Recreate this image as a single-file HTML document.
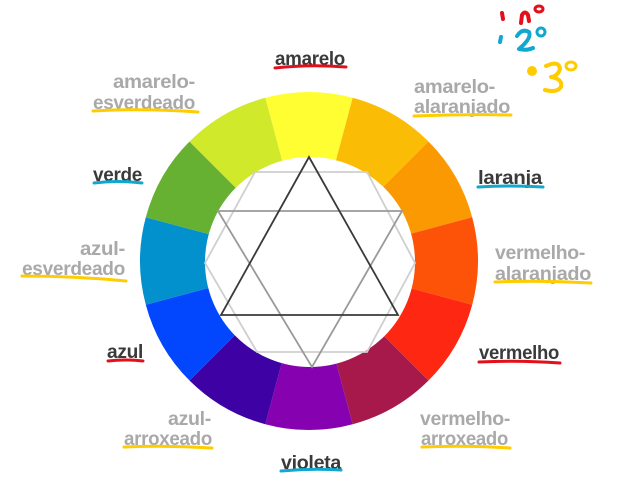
<!DOCTYPE html>
<html><head><meta charset="utf-8"><style>
html,body{margin:0;padding:0;background:#fff;width:621px;height:498px;overflow:hidden}
svg{display:block}
text{font-family:"Liberation Sans",sans-serif;font-weight:bold;font-size:19px;letter-spacing:-0.3px}
.g{fill:#a9a9a9}.d{fill:#3a3a3a}
.u{fill:none;stroke-width:3;stroke-linecap:round}
.r{stroke:#e3101c}.b{stroke:#10a8cf}.y{stroke:#ffcc00}
</style></head><body>
<svg width="621" height="498" viewBox="0 0 621 498">
<g>
<path d="M309 261 L265.3 97.8 A169 169 0 0 1 352.7 97.8Z" fill="#fefe33"/>
<path d="M309 261 L352.7 97.8 A169 169 0 0 1 428.5 141.5Z" fill="#fbbc05"/>
<path d="M309 261 L428.5 141.5 A169 169 0 0 1 472.2 217.3Z" fill="#fb9902"/>
<path d="M309 261 L472.2 217.3 A169 169 0 0 1 472.2 304.7Z" fill="#fd5308"/>
<path d="M309 261 L472.2 304.7 A169 169 0 0 1 428.5 380.5Z" fill="#fe2712"/>
<path d="M309 261 L428.5 380.5 A169 169 0 0 1 352.7 424.2Z" fill="#a7194b"/>
<path d="M309 261 L352.7 424.2 A169 169 0 0 1 265.3 424.2Z" fill="#8601af"/>
<path d="M309 261 L265.3 424.2 A169 169 0 0 1 189.5 380.5Z" fill="#3d01a4"/>
<path d="M309 261 L189.5 380.5 A169 169 0 0 1 145.8 304.7Z" fill="#0247fe"/>
<path d="M309 261 L145.8 304.7 A169 169 0 0 1 145.8 217.3Z" fill="#0391ce"/>
<path d="M309 261 L145.8 217.3 A169 169 0 0 1 189.5 141.5Z" fill="#66b032"/>
<path d="M309 261 L189.5 141.5 A169 169 0 0 1 265.3 97.8Z" fill="#d0ea2b"/>
<circle cx="310" cy="262" r="105" fill="#fff"/>
</g>
<polygon points="255,172 367,172 415,263 367,352 257,352 205,263" fill="none" stroke="#cfcfcf" stroke-width="1.8"/>
<polygon points="218,211 402,211 312,367" fill="none" stroke="#9a9a9a" stroke-width="1.8"/>
<polygon points="309,157 221,315 398,315" fill="none" stroke="#3a3a3a" stroke-width="1.8"/>

<text class="d" x="275" y="65" textLength="70" lengthAdjust="spacingAndGlyphs">amarelo</text>
<path class="u r" d="M275 68 Q310 64 346 67"/>

<text class="g" x="113" y="88" textLength="82" lengthAdjust="spacingAndGlyphs">amarelo-</text>
<text class="g" x="93" y="109" textLength="102" lengthAdjust="spacingAndGlyphs">esverdeado</text>
<path class="u y" d="M93 111 Q145 108 198 112"/>

<text class="d" x="93" y="181" textLength="49" lengthAdjust="spacingAndGlyphs">verde</text>
<path class="u b" d="M94 183 Q118 180 142 183"/>

<text class="g" x="80" y="255" textLength="45" lengthAdjust="spacingAndGlyphs">azul-</text>
<text class="g" x="22" y="275" textLength="103" lengthAdjust="spacingAndGlyphs">esverdeado</text>
<path class="u y" d="M22 276 Q75 276 126 281"/>

<text class="d" x="107" y="358" textLength="36" lengthAdjust="spacingAndGlyphs">azul</text>
<path class="u r" d="M108 361 Q125 359 143 361"/>

<text class="g" x="168" y="425" textLength="43" lengthAdjust="spacingAndGlyphs">azul-</text>
<text class="g" x="124" y="445" textLength="88" lengthAdjust="spacingAndGlyphs">arroxeado</text>
<path class="u y" d="M124 447 Q168 445 212 448"/>

<text class="d" x="281" y="469" textLength="60" lengthAdjust="spacingAndGlyphs">violeta</text>
<path class="u b" d="M281 471 Q311 468 341 470"/>

<text class="g" x="420" y="425" textLength="90" lengthAdjust="spacingAndGlyphs">vermelho-</text>
<text class="g" x="421" y="445" textLength="87" lengthAdjust="spacingAndGlyphs">arroxeado</text>
<path class="u y" d="M422 447 Q465 445 510 448"/>

<text class="d" x="479" y="359" textLength="80" lengthAdjust="spacingAndGlyphs">vermelho</text>
<path class="u r" d="M479 362 Q520 360 560 363"/>

<text class="g" x="495" y="259" textLength="90" lengthAdjust="spacingAndGlyphs">vermelho-</text>
<text class="g" x="495" y="280" textLength="96" lengthAdjust="spacingAndGlyphs">alaranjado</text>
<path class="u y" d="M495 282 Q543 280 591 283"/>

<text class="d" x="478" y="184" textLength="64" lengthAdjust="spacingAndGlyphs">laranja</text>
<path class="u b" d="M478 187 Q510 185 543 187"/>

<text class="g" x="414" y="93" textLength="81" lengthAdjust="spacingAndGlyphs">amarelo-</text>
<text class="g" x="414" y="113" textLength="96" lengthAdjust="spacingAndGlyphs">alaranjado</text>
<path class="u y" d="M414 116 Q462 114 511 115"/>

<g fill="none" stroke-linecap="round" stroke-linejoin="round" stroke-width="4">
<path d="M502 13 L503 19" stroke="#e3101c"/>
<path d="M521 23 L522 15 Q525 10 528 15 L529 21" stroke="#e3101c"/>
<ellipse cx="539" cy="9" rx="4" ry="3" stroke="#e3101c" stroke-width="3"/>
<path d="M501 37 L500 42" stroke="#10a8cf"/>
<path d="M517 36 Q522 28 529 32 Q532 38 519 49 Q526 51 533 48" stroke="#10a8cf"/>
<ellipse cx="541" cy="32" rx="4" ry="4" stroke="#10a8cf" stroke-width="3"/>
<circle cx="532" cy="71" r="3" fill="#ffcc00" stroke="#ffcc00"/>
<path d="M546 66 Q559 60 560 69 Q558 76 551 77 Q563 79 561 87 Q557 93 545 90" stroke="#ffcc00"/>
<ellipse cx="571" cy="66" rx="5" ry="4" stroke="#ffcc00" stroke-width="3"/>
</g>
</svg>
</body></html>
